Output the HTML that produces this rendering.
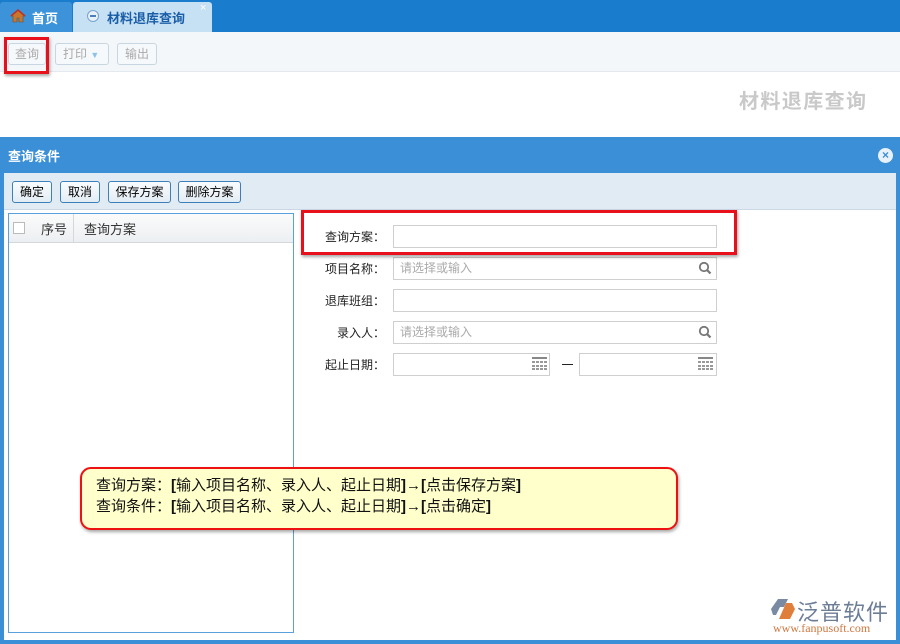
<!DOCTYPE html>
<html><head><meta charset="utf-8"><style>
*{margin:0;padding:0;box-sizing:border-box}
body{width:900px;height:644px;position:relative;overflow:hidden;background:#fff;font-family:"Liberation Sans","Noto Sans CJK SC",sans-serif;font-size:12px;color:#333}
.abs{position:absolute}
.btn{position:absolute;border:1px solid #c8d6e2;border-radius:3px;background:#f6f9fb;color:#aaa;font-size:12px;text-align:center;line-height:20px;height:22px}
.dbtn{position:absolute;top:181px;height:22px;border:1px solid #3d7fb8;border-radius:3px;background:linear-gradient(#fafcfe,#e3ecf4);color:#000;font-size:12px;line-height:20px;text-align:center}
.lbl{position:absolute;width:90px;left:295px;text-align:right;font-size:12px;color:#222}
.inp{position:absolute;height:23px;border:1px solid #cfcfcf;background:#fff;color:#aaa;font-size:12px;line-height:21px;padding-left:6px}
.red{position:absolute;border:3px solid #e8101a;box-shadow:1px 2px 3px rgba(0,0,0,.35)}
</style></head><body>
<div class="abs" style="left:0;top:0;width:900px;height:32px;background:#1a7ccc"></div>
<div class="abs" style="left:0;top:2px;width:72px;height:30px;background:#3d93d9;border-radius:3px 3px 0 0"></div>
<svg class="abs" style="left:10px;top:9px" width="16" height="14" viewBox="0 0 16 14"><path d="M8 1L1 7h2v6h4V9h2v4h4V7h2z" fill="#c9762d" stroke="#7a4b1e" stroke-width=".6"/><path d="M1 7L8 1l7 6" fill="none" stroke="#b8322a" stroke-width="1.5"/></svg>
<div class="abs" style="left:32px;top:8px;color:#fff;font-weight:bold;font-size:13px">首页</div>
<div class="abs" style="left:73px;top:2px;width:139px;height:30px;background:#c6e0f4;border-radius:3px 3px 0 0"></div>
<div class="abs" style="left:87px;top:10px;width:12px;height:12px;border-radius:50%;background:#e8f0f8;border:1px solid #7aa4cc"></div>
<div class="abs" style="left:90px;top:15px;width:6px;height:2px;background:#4a80b8"></div>
<div class="abs" style="left:107px;top:8px;color:#1a5ea8;font-weight:bold;font-size:13px">材料退库查询</div>
<div class="abs" style="left:200px;top:2px;color:#fff;font-size:11px">×</div>
<div class="abs" style="left:0;top:32px;width:900px;height:40px;background:#f3f7fa;border-bottom:1px solid #e3e9ee"></div>
<div class="btn" style="left:8px;top:43px;width:38px">查询</div>
<div class="btn" style="left:55px;top:43px;width:54px;text-align:left;padding-left:7px">打印 <span style="color:#8cc2ea;font-size:9px">▼</span></div>
<div class="btn" style="left:117px;top:43px;width:40px">输出</div>
<div class="red" style="left:4px;top:37px;width:45px;height:37px"></div>
<div class="abs" style="left:739px;top:85px;color:#c9c9c9;font-weight:bold;font-size:20px;letter-spacing:1.4px">材料退库查询</div>

<div class="abs" style="left:0;top:137px;width:900px;height:507px;background:#3a8fd6"></div>
<div class="abs" style="left:8px;top:146px;color:#fff;font-weight:bold;font-size:13px">查询条件</div>
<div class="abs" style="left:878px;top:148px;width:15px;height:15px;border-radius:50%;background:#e8f1fa;color:#3a8fd6;font-size:12px;line-height:14px;text-align:center;font-weight:bold">×</div>
<div class="abs" style="left:4px;top:173px;width:892px;height:467px;background:#fff"></div>
<div class="abs" style="left:4px;top:173px;width:892px;height:37px;background:#e1ebf4;border-bottom:1px solid #cbd8e4"></div>
<div class="dbtn" style="left:12px;width:40px">确定</div>
<div class="dbtn" style="left:60px;width:40px">取消</div>
<div class="dbtn" style="left:108px;width:63px">保存方案</div>
<div class="dbtn" style="left:178px;width:63px">删除方案</div>
<div class="abs" style="left:8px;top:213px;width:286px;height:420px;border:1px solid #5aa0dc;background:#fff"></div>
<div class="abs" style="left:9px;top:214px;width:284px;height:29px;background:linear-gradient(#fbfbfb,#eceff2);border-bottom:1px solid #d4d8dc"></div>
<div class="abs" style="left:13px;top:222px;width:12px;height:12px;border:1px solid #bbb;background:#fff"></div>
<div class="abs" style="left:41px;top:219px;font-size:13px">序号</div>
<div class="abs" style="left:73px;top:214px;width:1px;height:29px;background:#d4d8dc"></div>
<div class="abs" style="left:84px;top:219px;font-size:13px">查询方案</div>

<div class="lbl" style="top:228px">查询方案：</div>
<div class="inp" style="left:393px;top:225px;width:324px"></div>
<div class="lbl" style="top:260px">项目名称：</div>
<div class="inp" style="left:393px;top:257px;width:324px">请选择或输入</div>
<div class="lbl" style="top:292px">退库班组：</div>
<div class="inp" style="left:393px;top:289px;width:324px"></div>
<div class="lbl" style="top:324px">录入人：</div>
<div class="inp" style="left:393px;top:321px;width:324px">请选择或输入</div>
<div class="lbl" style="top:356px">起止日期：</div>
<div class="inp" style="left:393px;top:353px;width:157px"></div>
<div class="abs" style="left:562px;top:364px;width:11px;height:1px;background:#222"></div>
<div class="inp" style="left:579px;top:353px;width:138px"></div>
<svg class="abs" style="left:698px;top:261px" width="14" height="14" viewBox="0 0 14 14"><circle cx="6" cy="6" r="4.2" fill="none" stroke="#777" stroke-width="1.8"/><path d="M9 9l3.5 3.5" stroke="#777" stroke-width="2.2"/></svg>
<svg class="abs" style="left:698px;top:325px" width="14" height="14" viewBox="0 0 14 14"><circle cx="6" cy="6" r="4.2" fill="none" stroke="#777" stroke-width="1.8"/><path d="M9 9l3.5 3.5" stroke="#777" stroke-width="2.2"/></svg>
<svg class="abs" style="left:532px;top:357px" width="15" height="13"><rect width="15" height="2" fill="#888"/><g fill="#999"><rect y="4" width="15" height="2"/><rect y="8" width="15" height="2"/><rect y="11" width="15" height="2"/></g><g fill="#fff"><rect x="3" y="3" width="1" height="10"/><rect x="7" y="3" width="1" height="10"/><rect x="11" y="3" width="1" height="10"/></g></svg>
<svg class="abs" style="left:698px;top:357px" width="15" height="13"><rect width="15" height="2" fill="#888"/><g fill="#999"><rect y="4" width="15" height="2"/><rect y="8" width="15" height="2"/><rect y="11" width="15" height="2"/></g><g fill="#fff"><rect x="3" y="3" width="1" height="10"/><rect x="7" y="3" width="1" height="10"/><rect x="11" y="3" width="1" height="10"/></g></svg>
<div class="red" style="left:301px;top:210px;width:436px;height:45px"></div>

<div class="abs" style="left:80px;top:467px;width:598px;height:63px;background:#ffffcc;border:2px solid #e11;border-radius:11px;box-shadow:1px 2px 3px rgba(0,0,0,.35);padding:6px 0 0 14px;font-size:15px;line-height:21px;color:#111">查询方案：<b>[</b>输入项目名称、录入人、起止日期<b>]</b>→<b>[</b>点击保存方案<b>]</b><br>查询条件：<b>[</b>输入项目名称、录入人、起止日期<b>]</b>→<b>[</b>点击确定<b>]</b></div>

<svg class="abs" style="left:771px;top:598px" width="24" height="22" viewBox="0 0 24 22"><path d="M7 1h10l-4 8H9l-4 8H2L0 11z" fill="#7a8aa2"/><path d="M15 5h6l3 6-5 10H8z" fill="#e07e3c"/></svg>
<div class="abs" style="left:797px;top:595px;font-size:22px;color:#6c7d96;letter-spacing:1px">泛普软件</div>
<div class="abs" style="left:773px;top:621px;font-size:12px;color:#d07840;font-family:'Liberation Serif',serif">www.fanpusoft.com</div>
</body></html>
